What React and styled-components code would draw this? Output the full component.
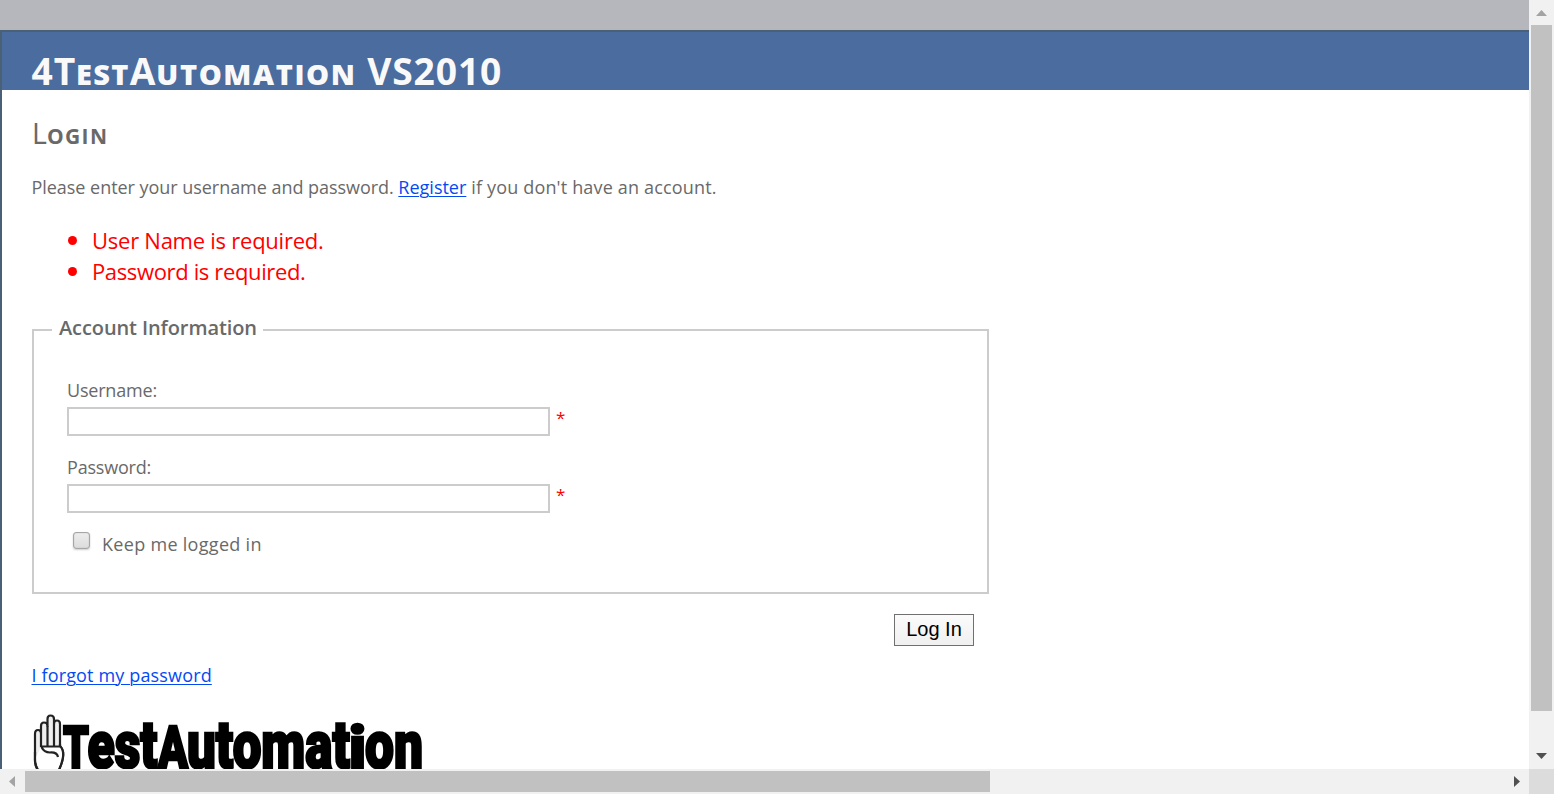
import React from 'react';
import styled, { createGlobalStyle } from 'styled-components';

const Global = createGlobalStyle`
  * { box-sizing: border-box; }
  html, body { margin: 0; overflow: hidden; }
  body { background: #b6b7bc; }
`;

const Window = styled.div`
  display: grid;
  grid-template-columns: 1529px 25px;
  grid-template-rows: 769px 25px;
  width: 1554px;
  height: 794px;
  overflow: hidden;
  font-family: 'Open Sans', 'Noto Sans', sans-serif;
  font-size: 18px;
  color: #696969;
`;

const Viewport = styled.div`
  padding-top: 30px;
  overflow: hidden;
  background: #b6b7bc;
`;

const Page = styled.div`
  height: 900px;
  border-top: 2px solid #496077;
  border-left: 2px solid #496077;
  background: #fff;
`;

const Header = styled.header`
  height: 58px;
  padding: 20px 0 0 29.5px;
  background: #4b6c9e;
`;

const Title = styled.h1`
  margin: 0;
  font-size: 37.2px;
  line-height: 38px;
  font-weight: 700;
  font-variant: small-caps;
  letter-spacing: 0.9px;
  color: #f9f9f9;
  white-space: nowrap;
`;

const Small = styled.span`
  font-size: ${p => p.$size};
  font-weight: ${p => p.$weight};
  line-height: 1px;
  letter-spacing: ${p => p.$spacing};
`;

const Main = styled.main`
  padding: 26px 0 0 30px;
`;

const Heading = styled.h2`
  margin: 0;
  font-size: 28.5px;
  line-height: 34px;
  font-weight: 400;
  font-variant: small-caps;
`;

const Line = styled.p`
  margin: 0;
  line-height: 24px;
  letter-spacing: ${p => p.$spacing || '0'};
  white-space: nowrap;
`;

const Intro = styled(Line)`
  margin: 25px 0 0 -0.5px;
`;

const Spaced = styled.span`
  letter-spacing: ${p => p.$spacing};
`;

const Link = styled.a`
  color: #034af3;
  text-decoration: underline;
  text-decoration-thickness: 1px;
  text-underline-offset: 2px;
`;

const Errors = styled.ul`
  margin: 25px 0 0;
  padding: 0 0 0 36px;
  list-style: none;
  color: #f00;
  font-size: 22px;
`;

const ErrorItem = styled.li`
  display: flex;
  align-items: center;
  height: 31px;
  letter-spacing: ${p => p.$spacing || '0'};

  &::before {
    content: '';
    width: 9px;
    height: 9px;
    margin: 2px 15px 0 0;
    border-radius: 50%;
    background: #f00;
  }
`;

const Fieldset = styled.fieldset`
  width: 957px;
  height: 281px;
  margin: 27px 0 0;
  padding: 31px 0 0 33px;
  border: 2px solid #ccc;
`;

const Legend = styled.legend`
  margin-left: -15px;
  padding: 0 6px 4px 7px;
  font-size: 20px;
  line-height: 30px;
  font-weight: 600;
  letter-spacing: -0.1px;
`;

const Field = styled.div`
  height: 77px;
`;

const FieldRow = styled.div`
  display: flex;
  margin-top: 5px;
`;

const Input = styled.input`
  width: 483px;
  height: 29px;
  border: 2px solid #ccc;
  border-radius: 0;
  padding: 4px;
  outline: 0;
  background: #fff;
`;

const Required = styled.span`
  margin-left: 6px;
  font-size: 17px;
  line-height: 22px;
  color: #f00;
`;

const Remember = styled.label`
  display: flex;
  align-items: flex-start;
`;

const Check = styled.input`
  appearance: none;
  width: 17px;
  height: 17px;
  margin: 0 12px 0 6px;
  border: 1px solid #a6a6a6;
  border-radius: 3px;
  background: linear-gradient(#ededed, #dcdcdc);
  box-shadow: 0 1px 2px rgba(0, 0, 0, 0.2), inset 0 0 1px #999;
`;

const Actions = styled.div`
  display: flex;
  justify-content: flex-end;
  width: 942px;
  margin-top: 20px;
`;

const Button = styled.button`
  width: 80px;
  height: 32px;
  padding: 0 0 2px;
  border: 1px solid #707070;
  border-radius: 0;
  background: linear-gradient(#fbfbfb, #f0f0f0);
  color: #000;
  font: 20px 'Liberation Sans', Arial, sans-serif;
`;

const Forgot = styled(Line)`
  margin: 17px 0 0 -0.5px;
`;

const Logo = styled.svg`
  display: block;
  margin-top: 27px;
`;

const LogoText = styled.text`
  font-family: Roboto, sans-serif;
  font-weight: 900;
  stroke: #000;
  stroke-width: 2.6px;
`;

const ScrollBar = styled.div`
  display: flex;
  flex-direction: ${p => (p.$vertical ? 'column' : 'row')};
  align-items: center;
  background: #f1f1f1;
`;

const Arrow = styled.svg`
  display: block;
  flex: none;
  width: 25px;
  height: 25px;
`;

const Thumb = styled.div`
  width: ${p => (p.$vertical ? '21px' : '965px')};
  height: ${p => (p.$vertical ? '686px' : '21px')};
  background: #c1c1c1;
`;

const Spacer = styled.div`
  flex: 1;
`;

const Corner = styled.div`
  background: #dcdcdc;
`;

const LoginForm = () => (
  <>
    <Fieldset>
      <Legend>Account Information</Legend>
      <Field>
        <Line as="label" $spacing="-0.2px">Username:</Line>
        <FieldRow><Input /><Required>*</Required></FieldRow>
      </Field>
      <Field>
        <Line as="label" $spacing="-0.2px">Password:</Line>
        <FieldRow><Input type="password" /><Required>*</Required></FieldRow>
      </Field>
      <Remember><Check type="checkbox" /><Line as="span" $spacing="0.3px">Keep me logged in</Line></Remember>
    </Fieldset>
    <Actions><Button>Log In</Button></Actions>
  </>
);

const LOGO_PARTS = [
  { text: 'T', x: 31, width: 26, size: 60 },
  { text: 'est', x: 55.5, width: 70, size: 66 },
  { text: 'A', x: 126, width: 30, size: 60 },
  { text: 'utomat', x: 155, width: 163, size: 66 },
  { text: 'i', x: 317, width: 17, size: 60 },
  { text: 'on', x: 333, width: 58, size: 66 },
];

const BrandLogo = () => (
  <Logo width="400" height="80" viewBox="0 0 400 80">
    <g fill="#eee" stroke="#222" strokeWidth="2.2" strokeLinejoin="round">
      <path d="M6 56Q3 52 3 46V20Q3 16 6 16Q9 16 9 20V12Q9 8.500 12 8.500Q15.500 8.500 15.500 12V5Q15.500 1.500 18.500 1.500Q22 1.500 22 5V10Q22 6.500 25 6.500Q28 6.500 28 10V32Q32 36 31 43Q30 50 26 58H7Z" />
      <path d="M9 33Q20 31 28.500 33Q33 42 26 55H8Q4 50 4 43Z" fill="#fff" stroke="none" />
      <path d="M9 20V33M15.500 12V32M22 10V32M28 32V30" fill="none" />
      <path d="M28 32Q32 36 31 43Q30 50 26 58H7Q3 52 3 46V38" fill="none" />
      <path d="M9 32.500H28M9.500 33Q12 38.500 18 38.500Q25 38 26 43" fill="none" />
    </g>
    <LogoText>
      {LOGO_PARTS.map(p => (
        <tspan key={p.x} x={p.x} y="54" textLength={p.width} lengthAdjust="spacingAndGlyphs" fontSize={p.size}>{p.text}</tspan>
      ))}
    </LogoText>
  </Logo>
);

export default function App() {
  return (
    <>
      <Global />
      <Window>
        <Viewport>
          <Page>
            <Header>
              <Title>4T<Small $size="1.1em" $weight={800} $spacing="1.3px">est</Small>A<Small $size="1.1em" $weight={800} $spacing="1.6px">utomation</Small> VS2010</Title>
            </Header>
            <Main>
              <Heading>L<Small $size="1.03em" $weight={700} $spacing="1.4px">ogin</Small></Heading>
              <Intro>
                <Spaced $spacing="-0.04px">Please enter your username and password. </Spaced>
                <Link>Register</Link>
                <Spaced $spacing="0.17px"> if you don't have an account.</Spaced>
              </Intro>
              <Errors>
                <ErrorItem $spacing="-0.25px">User Name is required.</ErrorItem>
                <ErrorItem $spacing="-0.36px">Password is required.</ErrorItem>
              </Errors>
              <LoginForm />
              <Forgot $spacing="0.15px"><Link>I forgot my password</Link></Forgot>
              <BrandLogo />
            </Main>
          </Page>
        </Viewport>
        <ScrollBar $vertical>
          <Arrow><path d="M7 16H18L12.500 10Z" fill="#a3a3a3" /></Arrow>
          <Thumb $vertical />
          <Spacer />
          <Arrow><path d="M7 9H18L12.500 15Z" fill="#505050" /></Arrow>
        </ScrollBar>
        <ScrollBar>
          <Arrow><path d="M15 7V18L9 12.500Z" fill="#a3a3a3" /></Arrow>
          <Thumb />
          <Spacer />
          <Arrow><path d="M10 7V18L16 12.500Z" fill="#505050" /></Arrow>
        </ScrollBar>
        <Corner />
      </Window>
    </>
  );
}
